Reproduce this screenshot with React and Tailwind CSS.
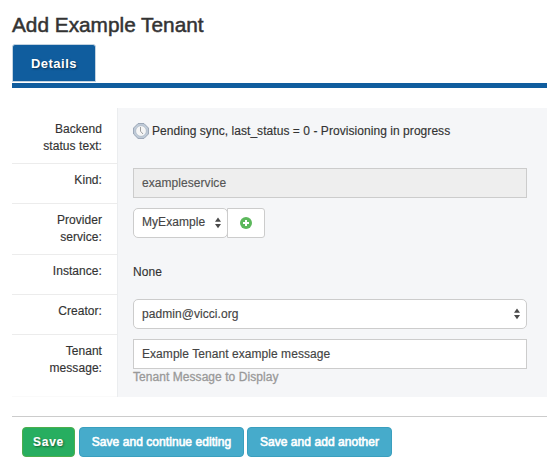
import React from "react";

function Arrows() {
  return (
    <svg width="6" height="12" viewBox="0 0 6 12" className="shrink-0" fill="#4a4a4a">
      <path d="M3 0.5 6 4.8H0ZM3 11.2 0 6.9H6Z" />
    </svg>
  );
}

function ClockIcon() {
  return (
    <svg width="16" height="16" viewBox="0 0 16 16" className="shrink-0">
      <path d="M5 .6h6L15.4 5v6L11 15.4H5L.6 11V5Z" fill="#c3cedb" stroke="#97a3b3" strokeWidth="1" />
      <circle cx="8" cy="8" r="5.4" fill="#f6f6f6" stroke="#aab6c4" strokeWidth=".8" />
      <path d="M7.5 4v4.2L10 11" fill="none" stroke="#a0a0a0" strokeWidth="1" />
    </svg>
  );
}

function Row({ label, height, last, pad = "pt-[13px]", children }) {
  return (
    <div className={`flex ${height}`}>
      <div className={`w-[105px] shrink-0 pr-[15px] text-right leading-[17px] whitespace-pre-line ${pad} ${last ? "border-b border-[#fafafa]" : "border-b border-[#ececec]"}`}>
        {label}
      </div>
      <div className="min-w-0 flex-1 border-l border-[#ebedef] bg-[#f5f6f8] pl-[15px] pr-5">{children}</div>
    </div>
  );
}

export default function App() {
  return (
    <div className="h-[468px] w-[547px] overflow-hidden bg-white pl-3 font-['Liberation_Sans',Arial,sans-serif] text-[12px] tracking-[0.055px] text-[#333] [-webkit-text-stroke-width:0.15px]">
      <h1 className="h-11 pt-[13px] text-[20.8px] leading-6 tracking-normal whitespace-nowrap [-webkit-text-stroke:0.5px_#333]">Add Example Tenant</h1>
      <div className="h-[39px]">
        <div className="flex h-[38px] w-[84px] items-center justify-center rounded-t-[3px] border border-[#c3d3e0] bg-[#105d9e] text-[13px] font-bold tracking-[0.5px] text-white [-webkit-text-stroke-width:0] [text-shadow:1px_1px_2px_rgba(0,0,0,0.5)]">
          <span className="pt-px">Details</span>
        </div>
      </div>
      <div className="h-[5px] bg-[#105d9e]" />
      <div className="mt-5">
        <Row label={"Backend\nstatus text:"} height="h-14">
          <div className="flex gap-[3px] pt-[15px]">
            <ClockIcon />
            <span className="leading-4 whitespace-nowrap">Pending sync, last_status = 0 - Provisioning in progress</span>
          </div>
        </Row>
        <Row label="Kind:" height="h-10" pad="pt-2">
          <div className="mt-1 flex h-[30px] items-center border border-[#ccc] bg-[#eee] px-2 text-[#555]">exampleservice</div>
        </Row>
        <Row label={"Provider\nservice:"} height="h-[51px]" pad="pt-2">
          <div className="mt-1 flex">
            <div className="flex h-[30px] w-[95px] items-center justify-between rounded-[5px] border border-[#ccc] bg-white pr-[6px] pl-2 text-[#444]">
              <span className="-mt-[2px]">MyExample</span>
              <Arrows />
            </div>
            <div className="-ml-px flex h-[30px] w-[38px] items-center justify-center rounded-r-[3px] border border-[#ccc] bg-white">
              <svg width="12" height="12" viewBox="0 0 12 12">
                <circle cx="6" cy="6" r="6" fill="#5cb85c" />
                <path d="M6 3v6M3 6h6" stroke="#fff" strokeWidth="2" />
              </svg>
            </div>
          </div>
        </Row>
        <Row label="Instance:" height="h-10" pad="pt-2">
          <div className="pt-[9px] leading-[17px]">None</div>
        </Row>
        <Row label="Creator:" height="h-10" pad="pt-2">
          <div className="mt-1 flex h-[30px] items-center justify-between rounded-[5px] border border-[#ccc] bg-white pr-[6px] pl-2 text-[#444]">
            <span>padmin@vicci.org</span>
            <Arrows />
          </div>
        </Row>
        <Row label={"Tenant\nmessage:"} height="h-[62px]" pad="pt-2" last>
          <div className="mt-1 flex h-[30px] items-center border border-[#ccc] bg-white px-2 text-[#444]">Example Tenant example message</div>
          <div className="leading-4 text-[#999] [-webkit-text-stroke-width:0.3px]">Tenant Message to Display</div>
        </Row>
      </div>
      <div className="mt-[19px] flex border-t border-[#ccc] pt-[10px] pl-[10px] text-white">
        <div className="flex h-[30px] w-[53px] items-center justify-center rounded-[4px] border border-[#4cae4c] bg-[#27ae60] font-bold tracking-[0.7px] [text-shadow:1px_1px_2px_rgba(0,0,0,0.5)]">Save</div>
        <div className="ml-1 flex h-[30px] w-[165px] items-center justify-center rounded-[4px] border border-[#3a9fbe] bg-[#46abcb] whitespace-nowrap [-webkit-text-stroke-width:0.6px]">Save and continue editing</div>
        <div className="ml-[3px] flex h-[30px] w-[145px] items-center justify-center rounded-[4px] border border-[#3a9fbe] bg-[#46abcb] whitespace-nowrap [-webkit-text-stroke-width:0.6px]">Save and add another</div>
      </div>
    </div>
  );
}
